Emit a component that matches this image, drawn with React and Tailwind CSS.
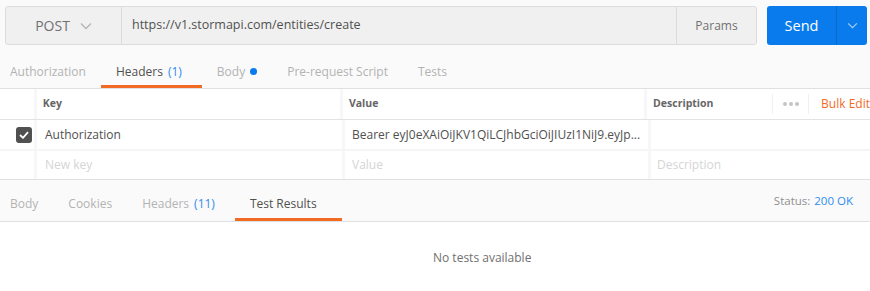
import React from "react";

const font = { fontFamily: '"Open Sans", "Noto Sans", sans-serif' };

const Chevron = ({ className }) => (
  <svg viewBox="0 0 12 8" className={className} fill="none" stroke="currentColor" strokeWidth="1.3">
    <path d="M1 1.5 L6 6.5 L11 1.5" />
  </svg>
);

const Tab = ({ label, count, dot, active, wide }) => (
  <div className={`relative h-full flex items-center pl-[15px] ${count || wide ? "pr-[20px]" : "pr-[15px]"} ${wide ? "pr-[25px]" : ""}`}>
    <span className={active ? "text-[#505050]" : "text-[#b3b3b3]"}>{label}</span>
    {count && <span className="ml-[5px] text-[#2f8cf0]">{count}</span>}
    {dot && <span className="ml-[5px] w-[7px] h-[7px] rounded-full bg-[#097bed]" />}
    {active && <div className="absolute bottom-0 left-0 right-0 h-[3px] bg-[#f26b25]" />}
  </div>
);

const App = () => {
  return (
    <div style={font} className="w-[870px] h-[291px] overflow-hidden bg-[#fafafa] text-[12px] text-[#505050]">
      {/* url bar */}
      <div className="flex items-center pt-[6px] pl-[5px] pr-[3px] h-[45px]">
        <div className="flex flex-1 h-[39px] bg-[#f0f0f0] border border-[#dcdcdc] rounded-[3px]">
          <div className="w-[116px] flex items-center justify-center gap-[10px] border-r border-[#dcdcdc] text-[14px] text-[#707070] font-medium">
            <span>POST</span>
            <Chevron className="w-[12px] h-[8px] text-[#b5b5b5]" />
          </div>
          <div className="flex-1 flex items-center pl-[10px] text-[#505050] text-[12.5px]">https://v1.stormapi.com/entities/create</div>
          <div className="w-[80px] flex items-center justify-center border-l border-[#dcdcdc] text-[#707070]">Params</div>
        </div>
        <div className="ml-[10px] flex h-[39px] w-[100px] rounded-[3px] bg-[#097bed] text-white">
          <div className="w-[69px] flex items-center justify-center text-[14.5px]">Send</div>
          <div className="flex-1 flex items-center justify-center border-l border-[#0a68c8]">
            <Chevron className="w-[11px] h-[7px] text-[#a9cdf7]" />
          </div>
        </div>
      </div>

      {/* request tabs */}
      <div className="flex h-[44px] pt-[10px] border-b border-[#e0e0e0] -ml-[5px]">
        <Tab label="Authorization" />
        <Tab label="Headers" count="(1)" active />
        <Tab label="Body" dot />
        <Tab label="Pre-request Script" />
        <Tab label="Tests" />
      </div>

      {/* headers table */}
      <div className="bg-white">
        <div className="flex h-[31px] border-b border-[#e3e3e3] text-[10.5px] font-bold text-[#666]">
          <div className="w-[37px] border-r-[3px] border-[#f7f7f7]" />
          <div className="w-[308px] flex items-center pl-[6px] border-r-[3px] border-[#f7f7f7]">Key</div>
          <div className="w-[306px] flex items-center pl-[6px] border-r-[3px] border-[#f7f7f7]">Value</div>
          <div className="w-[126px] flex items-center pl-[6px]">Description</div>
          <div className="w-[37px] my-[5px] flex items-center justify-center gap-[2px] border-x border-[#f0f0f0]">
            <span className="w-[4px] h-[4px] rounded-full bg-[#c4c4c4]" />
            <span className="w-[4px] h-[4px] rounded-full bg-[#c4c4c4]" />
            <span className="w-[4px] h-[4px] rounded-full bg-[#c4c4c4]" />
          </div>
          <div className="flex-1 flex items-center pl-[12px] font-normal text-[12px] text-[#f26b25] whitespace-nowrap">Bulk Edit</div>
        </div>
        <div className="flex h-[31px] border-b-[2px] border-[#f5f5f5]">
          <div className="w-[37px] flex items-center pl-[16px] border-r-[3px] border-[#f7f7f7]">
            <div className="w-[16px] h-[16px] shrink-0 rounded-[3px] bg-[#505050] flex items-center justify-center">
              <svg viewBox="0 0 10 8" className="w-[10px] h-[8px]" fill="none" stroke="white" strokeWidth="1.8">
                <path d="M1 4 L4 6.8 L9 1.2" />
              </svg>
            </div>
          </div>
          <div className="w-[308px] flex items-center pl-[8px] border-r-[3px] border-[#f7f7f7]">Authorization</div>
          <div className="w-[306px] flex items-center pl-[7px] border-r-[3px] border-[#f7f7f7] whitespace-nowrap overflow-hidden">Bearer eyJ0eXAiOiJKV1QiLCJhbGciOiJIUzI1NiJ9.eyJp...</div>
          <div className="flex-1" />
        </div>
        <div className="flex h-[29px] border-b border-[#e0e0e0] text-[#d5d5d5]">
          <div className="w-[37px] border-r-[3px] border-[#f7f7f7]" />
          <div className="w-[308px] flex items-center pl-[8px] border-r-[3px] border-[#f7f7f7]">New key</div>
          <div className="w-[306px] flex items-center pl-[7px] border-r-[3px] border-[#f7f7f7]">Value</div>
          <div className="flex-1 flex items-center pl-[6px]">Description</div>
        </div>
      </div>

      {/* response tabs */}
      <div className="flex items-stretch h-[42px] border-b border-[#e0e0e0] bg-[#fafafa]">
        <div className="flex -ml-[5px] pt-[6px]">
          <Tab label="Body" />
          <Tab label="Cookies" />
          <Tab label="Headers" count="(11)" />
          <Tab label="Test Results" active wide />
        </div>
        <div className="ml-auto flex items-center pr-[17px] text-[11.5px]">
          <span className="text-[#909090]">Status:</span>
          <span className="ml-[4px] text-[#2f8cf0]">200 OK</span>
        </div>
      </div>

      <div className="bg-white h-[72px] flex items-center pl-[433px] text-[#707070]">No tests available</div>
    </div>
  );
};

export default App;
